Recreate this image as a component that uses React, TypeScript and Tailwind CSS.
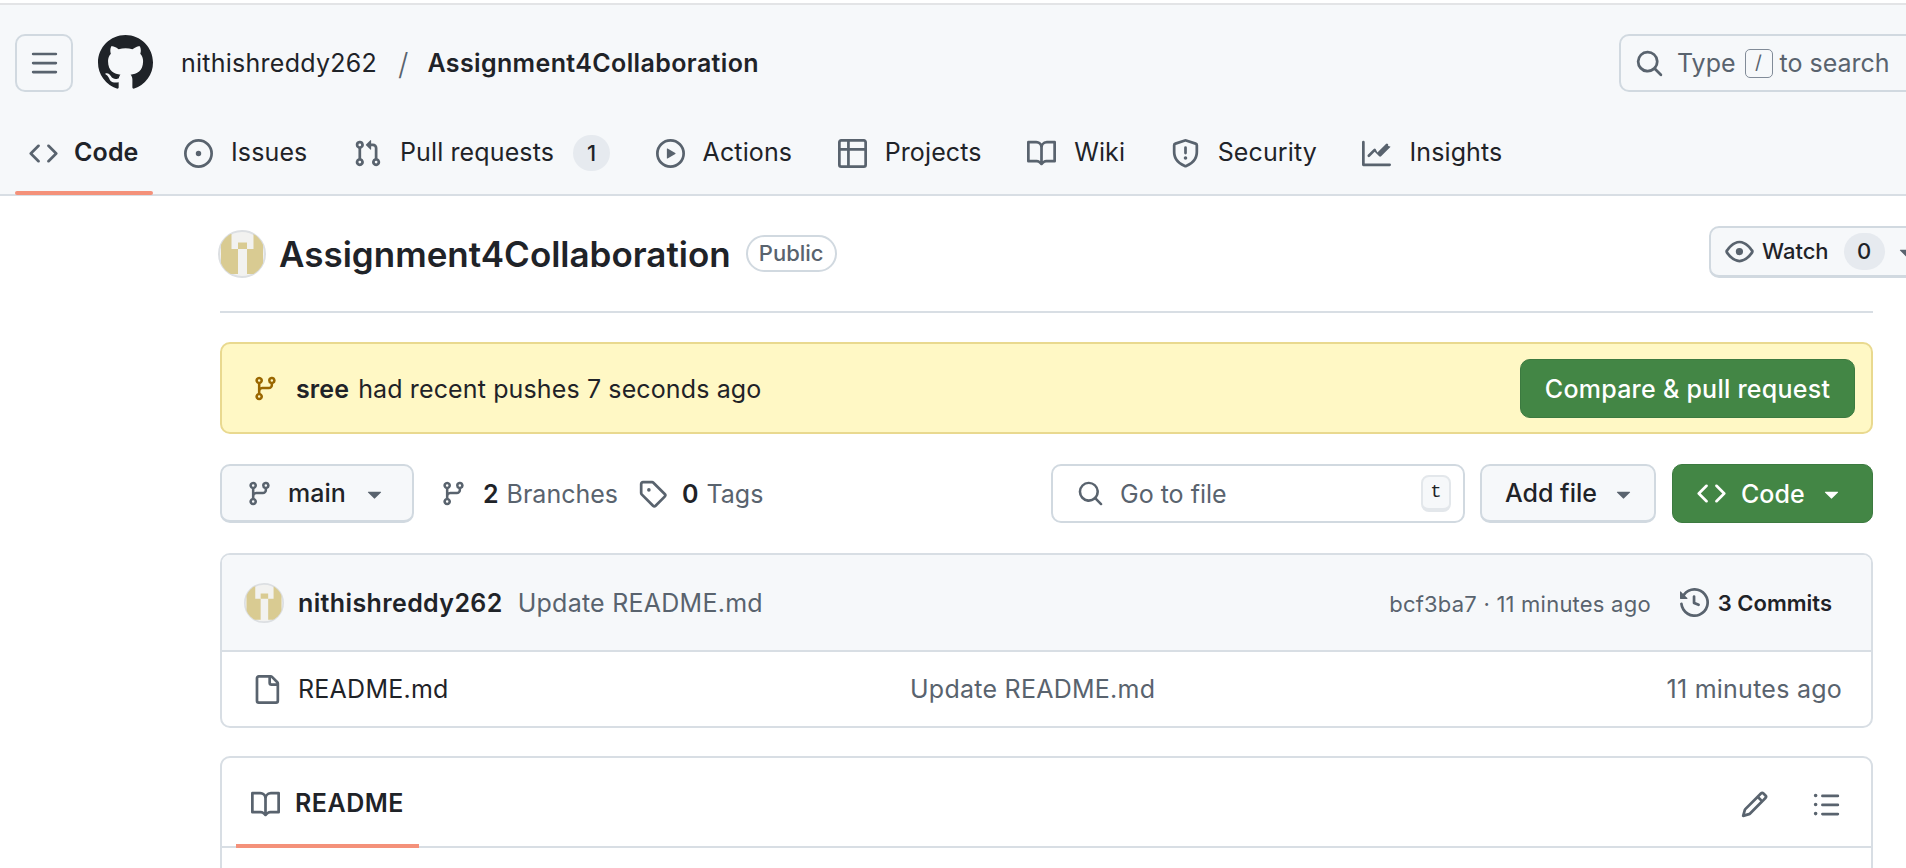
const icons: Record<string, string> = {
  bars: "M1 2.75A.75.75 0 0 1 1.75 2h12.5a.75.75 0 0 1 0 1.5H1.75A.75.75 0 0 1 1 2.75Zm0 5A.75.75 0 0 1 1.75 7h12.5a.75.75 0 0 1 0 1.5H1.75A.75.75 0 0 1 1 7.75ZM1.75 12h12.5a.75.75 0 0 1 0 1.5H1.75a.75.75 0 0 1 0-1.5Z",
  github: "M8 0c4.42 0 8 3.58 8 8a8.013 8.013 0 0 1-5.45 7.59c-.4.08-.55-.17-.55-.38 0-.27.01-1.13.01-2.2 0-.75-.25-1.23-.54-1.48 1.78-.2 3.65-.88 3.65-3.95 0-.88-.31-1.59-.82-2.15.08-.2.36-1.02-.08-2.12 0 0-.67-.22-2.2.82-.64-.18-1.32-.27-2-.27-.68 0-1.36.09-2 .27-1.53-1.03-2.2-.82-2.2-.82-.44 1.1-.16 1.92-.08 2.12-.51.56-.82 1.28-.82 2.15 0 3.06 1.86 3.75 3.64 3.95-.23.2-.44.55-.51 1.07-.46.21-1.61.55-2.33-.66-.15-.24-.6-.83-1.23-.82-.67.01-.27.38.01.53.34.19.73.9.82 1.13.16.45.68 1.31 2.69.94 0 .67.01 1.3.01 1.49 0 .21-.15.45-.55.38A7.995 7.995 0 0 1 0 8c0-4.42 3.58-8 8-8Z",
  code: "m11.28 3.22 4.25 4.25a.75.75 0 0 1 0 1.06l-4.25 4.25a.749.749 0 0 1-1.275-.326.749.749 0 0 1 .215-.734L13.94 8l-3.72-3.72a.749.749 0 0 1 .326-1.275.749.749 0 0 1 .734.215Zm-6.56 0a.751.751 0 0 1 1.042.018.751.751 0 0 1 .018 1.042L2.06 8l3.72 3.72a.749.749 0 0 1-.326 1.275.749.749 0 0 1-.734-.215L.47 8.53a.75.75 0 0 1 0-1.06Z",
  issue: "M8 9.5a1.5 1.5 0 1 0 0-3 1.5 1.5 0 0 0 0 3Z M8 0a8 8 0 1 1 0 16A8 8 0 0 1 8 0ZM1.5 8a6.5 6.5 0 1 0 13 0 6.5 6.5 0 0 0-13 0Z",
  pr: "M1.5 3.25a2.25 2.25 0 1 1 3 2.122v5.256a2.251 2.251 0 1 1-1.5 0V5.372A2.25 2.25 0 0 1 1.5 3.25Zm5.677-.177L9.573.677A.25.25 0 0 1 10 .854V2.5h1A2.5 2.5 0 0 1 13.5 5v5.628a2.251 2.251 0 1 1-1.5 0V5a1 1 0 0 0-1-1h-1v1.646a.25.25 0 0 1-.427.177L7.177 3.427a.25.25 0 0 1 0-.354ZM3.75 2.5a.75.75 0 1 0 0 1.5.75.75 0 0 0 0-1.5Zm0 9.5a.75.75 0 1 0 0 1.5.75.75 0 0 0 0-1.5Zm8.25.75a.75.75 0 1 0 1.5 0 .75.75 0 0 0-1.5 0Z",
  play: "M8 0a8 8 0 1 1 0 16A8 8 0 0 1 8 0ZM1.5 8a6.5 6.5 0 1 0 13 0 6.5 6.5 0 0 0-13 0Zm4.879-2.773 4.264 2.559a.25.25 0 0 1 0 .428l-4.264 2.559A.25.25 0 0 1 6 10.559V5.442a.25.25 0 0 1 .379-.215Z",
  table: "M0 1.75C0 .784.784 0 1.75 0h12.5C15.216 0 16 .784 16 1.75v12.5A1.75 1.75 0 0 1 14.25 16H1.75A1.75 1.75 0 0 1 0 14.25ZM6.5 6.5v8h7.75a.25.25 0 0 0 .25-.25V6.5Zm8-1.5V1.75a.25.25 0 0 0-.25-.25H6.5V5Zm-13 1.5v7.75c0 .138.112.25.25.25H5v-8ZM5 5V1.5H1.75a.25.25 0 0 0-.25.25V5Z",
  book: "M0 1.75A.75.75 0 0 1 .75 1h4.253c1.227 0 2.317.59 3 1.501A3.743 3.743 0 0 1 11.006 1h4.245a.75.75 0 0 1 .75.75v10.5a.75.75 0 0 1-.75.75h-4.507a2.25 2.25 0 0 0-1.591.659l-.622.621a.75.75 0 0 1-1.06 0l-.622-.621A2.25 2.25 0 0 0 5.258 13H.75a.75.75 0 0 1-.75-.75Zm7.251 10.324.004-5.073-.002-2.253A2.25 2.25 0 0 0 5.003 2.5H1.5v9h3.757a3.75 3.75 0 0 1 1.994.574ZM8.755 4.75l-.004 7.322a3.752 3.752 0 0 1 1.992-.572H14.5v-9h-3.495a2.25 2.25 0 0 0-2.25 2.25Z",
  shield: "M7.467.133a1.748 1.748 0 0 1 1.066 0l5.25 1.68A1.75 1.75 0 0 1 15 3.48V7c0 1.566-.32 3.182-1.303 4.682-.983 1.498-2.585 2.813-5.032 3.855a1.697 1.697 0 0 1-1.33 0c-2.447-1.042-4.049-2.357-5.032-3.855C1.32 10.182 1 8.566 1 7V3.48a1.75 1.75 0 0 1 1.217-1.667Zm.61 1.429a.25.25 0 0 0-.153 0l-5.25 1.68a.25.25 0 0 0-.174.238V7c0 1.358.275 2.666 1.057 3.86.784 1.194 2.121 2.34 4.366 3.297a.196.196 0 0 0 .154 0c2.245-.956 3.582-2.104 4.366-3.298C13.225 9.666 13.5 8.36 13.5 7V3.48a.251.251 0 0 0-.174-.237l-5.25-1.68ZM8.75 4.75v3a.75.75 0 0 1-1.5 0v-3a.75.75 0 0 1 1.5 0ZM9 10.5a1 1 0 1 1-2 0 1 1 0 0 1 2 0Z",
  graph: "M1.5 1.75V13.5h13.75a.75.75 0 0 1 0 1.5H.75a.75.75 0 0 1-.75-.75V1.75a.75.75 0 0 1 1.5 0Zm14.28 2.53-5.25 5.25a.75.75 0 0 1-1.06 0L7 7.06 4.28 9.78a.751.751 0 0 1-1.042-.018.751.751 0 0 1-.018-1.042l3.25-3.25a.75.75 0 0 1 1.06 0L8.5 7.44l4.72-4.72a.751.751 0 0 1 1.042.018.751.751 0 0 1 .018 1.042Z",
  branch: "M9.5 3.25a2.25 2.25 0 1 1 3 2.122V6A2.5 2.5 0 0 1 10 8.5H6a1 1 0 0 0-1 1v1.128a2.251 2.251 0 1 1-1.5 0V5.372a2.25 2.25 0 1 1 1.5 0v1.836A2.493 2.493 0 0 1 6 7h4a1 1 0 0 0 1-1v-.628A2.25 2.25 0 0 1 9.5 3.25Zm-6 0a.75.75 0 1 0 1.5 0 .75.75 0 0 0-1.5 0Zm8.25-.75a.75.75 0 1 0 0 1.5.75.75 0 0 0 0-1.5ZM4.25 12a.75.75 0 1 0 0 1.5.75.75 0 0 0 0-1.5Z",
  tag: "M1 7.775V2.75C1 1.784 1.784 1 2.75 1h5.025c.464 0 .91.184 1.238.513l6.25 6.25a1.75 1.75 0 0 1 0 2.474l-5.026 5.026a1.75 1.75 0 0 1-2.474 0l-6.25-6.25A1.752 1.752 0 0 1 1 7.775Zm1.5 0c0 .066.026.13.073.177l6.25 6.25a.25.25 0 0 0 .354 0l5.025-5.025a.25.25 0 0 0 0-.354l-6.25-6.25a.25.25 0 0 0-.177-.073H2.75a.25.25 0 0 0-.25.25ZM6 5a1 1 0 1 1 0 2 1 1 0 0 1 0-2Z",
  search: "M10.68 11.74a6 6 0 0 1-7.922-8.982 6 6 0 0 1 8.982 7.922l3.04 3.04a.749.749 0 0 1-.326 1.275.749.749 0 0 1-.734-.215ZM11.5 7a4.499 4.499 0 1 0-8.997 0A4.499 4.499 0 0 0 11.5 7Z",
  file: "M2 1.75C2 .784 2.784 0 3.75 0h6.586c.464 0 .909.184 1.237.513l2.914 2.914c.329.328.513.773.513 1.237v9.586A1.75 1.75 0 0 1 13.25 16h-9.5A1.75 1.75 0 0 1 2 14.25Zm1.75-.25a.25.25 0 0 0-.25.25v12.5c0 .138.112.25.25.25h9.5a.25.25 0 0 0 .25-.25V6h-2.75A1.75 1.75 0 0 1 9 4.25V1.5Zm6.75.062V4.25c0 .138.112.25.25.25h2.688l-.011-.013-2.914-2.914-.013-.011Z",
  history: "m.427 1.927 1.215 1.215a8.002 8.002 0 1 1-1.6 5.685.75.75 0 1 1 1.493-.154 6.5 6.5 0 1 0 1.18-4.458l1.358 1.358A.25.25 0 0 1 3.896 6H.25A.25.25 0 0 1 0 5.75V2.104a.25.25 0 0 1 .427-.177ZM7.75 4a.75.75 0 0 1 .75.75v2.992l2.028.812a.75.75 0 0 1-.557 1.392l-2.5-1A.751.751 0 0 1 7 8.25v-3.5A.75.75 0 0 1 7.75 4Z",
  pencil: "M11.013 1.427a1.75 1.75 0 0 1 2.474 0l1.086 1.086a1.75 1.75 0 0 1 0 2.474l-8.61 8.61c-.21.21-.47.364-.756.445l-3.251.93a.75.75 0 0 1-.927-.928l.929-3.25c.081-.286.235-.547.445-.758l8.61-8.61Zm.176 4.823L9.75 4.81l-6.286 6.287a.253.253 0 0 0-.064.108l-.558 1.953 1.953-.558a.253.253 0 0 0 .108-.064Zm1.238-3.763a.25.25 0 0 0-.354 0L10.811 3.75l1.439 1.44 1.263-1.263a.25.25 0 0 0 0-.354Z",
  list: "M5.75 2.5h8.5a.75.75 0 0 1 0 1.5h-8.5a.75.75 0 0 1 0-1.5Zm0 5h8.5a.75.75 0 0 1 0 1.5h-8.5a.75.75 0 0 1 0-1.5Zm0 5h8.5a.75.75 0 0 1 0 1.5h-8.5a.75.75 0 0 1 0-1.5ZM2 14a1 1 0 1 1 0-2 1 1 0 0 1 0 2Zm1-6a1 1 0 1 1-2 0 1 1 0 0 1 2 0ZM2 4a1 1 0 1 1 0-2 1 1 0 0 1 0 2Z",
  eye: "M8 2c1.981 0 3.671.992 4.933 2.078 1.27 1.091 2.187 2.345 2.637 3.023a1.62 1.62 0 0 1 0 1.798c-.45.678-1.367 1.932-2.637 3.023C11.67 13.008 9.981 14 8 14c-1.981 0-3.671-.992-4.933-2.078C1.797 10.83.88 9.576.43 8.898a1.62 1.62 0 0 1 0-1.798c.45-.677 1.367-1.931 2.637-3.022C4.33 2.992 6.019 2 8 2ZM1.679 7.932a.12.12 0 0 0 0 .136c.411.622 1.241 1.75 2.366 2.717C5.176 11.758 6.527 12.5 8 12.5c1.473 0 2.825-.742 3.955-1.715 1.124-.967 1.954-2.096 2.366-2.717a.12.12 0 0 0 0-.136c-.412-.621-1.242-1.75-2.366-2.717C10.824 4.242 9.473 3.5 8 3.5c-1.473 0-2.825.742-3.955 1.715-1.124.967-1.954 2.096-2.366 2.717ZM8 10a2 2 0 1 1-.001-3.999A2 2 0 0 1 8 10Z",
  caret: "m4.427 7.427 3.396 3.396a.25.25 0 0 0 .354 0l3.396-3.396A.25.25 0 0 0 11.396 7H4.604a.25.25 0 0 0-.177.427Z",
};

function Octicon({ name, className }: { name: string; className?: string }) {
  return (
    <svg viewBox="0 0 16 16" fill="currentColor" className={"shrink-0 " + (className ?? "w-[29px] h-[29px] text-[#59636e]")}>
      <path d={icons[name]} />
    </svg>
  );
}

// identicon of the repo owner
function Avatar({ className }: { className: string }) {
  return (
    <svg viewBox="0 0 48 48" className={"shrink-0 " + className}>
      <clipPath id="avatar-clip">
        <circle cx="24" cy="24" r="23" />
      </clipPath>
      <circle cx="24" cy="24" r="23" fill="#f2f2f0" stroke="#dcdfe2" strokeWidth="2" />
      <g clipPath="url(#avatar-clip)" fill="#d9cb92">
        <path d="M3 4h10.5v15H20v25H3z" />
        <path d="M20 12.5h9V19h-9z" />
        <path d="M35.5 4H45v40H29V19h6.5z" />
      </g>
    </svg>
  );
}

function Tab({ icon, label, active, children }: { icon: string; label: string; active?: boolean; children?: React.ReactNode }) {
  return (
    <div className={"relative flex h-[72px] items-center px-[14px] pb-[10px] text-[25px] tracking-[0.005em] text-[#1f2328] " + (active ? "gap-[16px] font-semibold" : "gap-[18px]")}>
      <Octicon name={icon} />
      <span>{label}</span>
      {children}
      {active && <div className="absolute bottom-[-1px] left-0 right-0 h-[4px] rounded-full bg-[#f4917a]" />}
    </div>
  );
}

export default function App() {
  return (
    <div className="h-[868px] w-[1906px] overflow-hidden bg-white font-['Inter',sans-serif] text-[#1f2328]">
      {/* top bar */}
      <header className="mt-[3px] border-y-2 border-t-[#e3e4e6] border-b-[#d8dee4] bg-[#f6f8fa]">
        <div className="flex h-[117px] items-start pt-[29px] pl-[15px]">
          <div className="flex h-[58px] w-[58px] shrink-0 items-center justify-center rounded-[10px] border-2 border-[#d1d9e0]">
            <Octicon name="bars" />
          </div>
          <Octicon name="github" className="ml-[25px] mt-[1px] h-[55px] w-[55px] text-[#1f2328]" />
          <div className="ml-[28px] flex h-[58px] items-center pt-[2px] text-[25px]">
            <span className="tracking-[0.01em]">nithishreddy262</span>
            <span className="ml-[21px] text-[30px] font-light text-[#59636e]">/</span>
            <span className="ml-[19px] font-semibold tracking-[0.015em]">Assignment4Collaboration</span>
          </div>
          <div className="ml-auto mr-[-113px] flex h-[58px] w-[400px] shrink-0 items-center rounded-[10px] border-2 border-[#d1d9e0] pl-[14px] text-[25px] text-[#59636e]">
            <Octicon name="search" />
            <span className="ml-[13px] pt-[2px]">Type</span>
            <span className="ml-[9px] flex h-[29px] w-[28px] items-center justify-center rounded-[5px] border border-[#818b98] text-[19px]">/</span>
            <span className="ml-[7px] pt-[2px]">to search</span>
          </div>
        </div>
        <nav className="flex h-[72px] items-start gap-[17.5px] pl-[15px]">
          <Tab icon="code" label="Code" active />
          <Tab icon="issue" label="Issues" />
          <Tab icon="pr" label="Pull requests">
            <span className="ml-[1px] flex h-[36px] w-[37px] items-center justify-center rounded-full bg-[#e6eaef] text-[22px] font-medium">1</span>
          </Tab>
          <Tab icon="play" label="Actions" />
          <Tab icon="table" label="Projects" />
          <Tab icon="book" label="Wiki" />
          <Tab icon="shield" label="Security" />
          <Tab icon="graph" label="Insights" />
        </nav>
      </header>

      <main className="ml-[220px] w-[1653px]">
        {/* repo title */}
        <div className="flex h-[117px] items-start border-b-2 border-[#d8dee4] pt-[30px]">
          <Avatar className="mt-[4px] ml-[-2px] h-[48px] w-[48px]" />
          <h1 className="ml-[13px] flex h-[56px] items-center text-[35px] font-semibold">Assignment4Collaboration</h1>
          <span className="ml-[15px] mt-[9px] flex h-[37px] w-[91px] items-center justify-center rounded-full border-2 border-[#d1d9e0] text-[22px] font-medium text-[#59636e]">Public</span>
          <div className="ml-auto mr-[-70px] flex h-[52px] w-[234px] shrink-0 items-center rounded-[10px] border-2 border-b-[3px] border-[#d1d9e0] bg-[#f6f8fa] pl-[14px] text-[22px] font-medium">
            <Octicon name="eye" />
            <span className="ml-[8px]">Watch</span>
            <span className="ml-[15px] flex h-[37px] w-[41px] items-center justify-center rounded-full bg-[#e6eaef]">0</span>
            <Octicon name="caret" className="ml-[7px] h-[29px] w-[29px] text-[#59636e]" />
          </div>
        </div>

        {/* recent pushes banner */}
        <div className="mt-[29px] flex h-[92px] items-center justify-between rounded-[10px] border-2 border-[#e9d98f] bg-[#fff8c5] pr-[16px] pl-[30px]">
          <div className="flex items-center text-[25px] tracking-[0.005em]">
            <Octicon name="branch" className="h-[27px] w-[27px] text-[#9a6700]" />
            <span className="ml-[17px] pt-[3px] font-semibold">sree</span>
            <span className="ml-[9px] pt-[3px]">had recent pushes 7 seconds ago</span>
          </div>
          <div className="flex h-[59px] w-[335px] items-center justify-center rounded-[10px] border border-[#3c7a40] bg-[#438645] pt-[3px] text-[25px] font-medium tracking-[0.01em] text-white">Compare &amp; pull request</div>
        </div>

        {/* branch bar */}
        <div className="mt-[30px] flex h-[59px] items-center">
          <div className="flex h-[59px] w-[194px] shrink-0 items-center rounded-[10px] border-2 border-b-[3px] border-[#d1d9e0] bg-[#f6f8fa] pl-[24px] text-[25px] font-medium">
            <Octicon name="branch" className="h-[27px] w-[27px] text-[#59636e]" />
            <span className="ml-[15px] pt-[2px]">main</span>
            <Octicon name="caret" className="ml-[14px] h-[29px] w-[29px] text-[#59636e]" />
          </div>
          <Octicon name="branch" className="ml-[26px] h-[27px] w-[27px] text-[#59636e]" />
          <span className="ml-[16px] pt-[2px] text-[25px] font-semibold">2</span>
          <span className="ml-[8px] pt-[2px] text-[25px] text-[#59636e]">Branches</span>
          <Octicon name="tag" className="ml-[20px] h-[29px] w-[29px] text-[#59636e]" />
          <span className="ml-[15px] pt-[2px] text-[25px] font-semibold">0</span>
          <span className="ml-[8px] pt-[2px] text-[25px] text-[#59636e]">Tags</span>

          <div className="ml-auto flex h-[59px] w-[414px] items-center rounded-[10px] border-2 border-[#d1d9e0] bg-white pr-[12px] pl-[24px] text-[25px] text-[#59636e]">
            <Octicon name="search" className="h-[27px] w-[27px] text-[#59636e]" />
            <span className="ml-[16px] pt-[2px]">Go to file</span>
            <span className="ml-auto flex h-[37px] w-[30px] items-center justify-center rounded-[8px] border-2 border-b-[4px] border-[#e3e7eb] bg-[#f6f8fa] font-['Liberation_Mono',monospace] text-[19px] text-[#1f2328]">t</span>
          </div>
          <div className="ml-[15px] flex h-[59px] w-[176px] shrink-0 items-center rounded-[10px] border-2 border-b-[3px] border-[#d1d9e0] bg-[#f6f8fa] pl-[23px] text-[25px] font-medium">
            <span className="pt-[2px]">Add file</span>
            <Octicon name="caret" className="ml-[12px] h-[29px] w-[29px] text-[#59636e]" />
          </div>
          <div className="ml-[16px] flex h-[59px] w-[201px] shrink-0 items-center rounded-[10px] border border-[#3c7a40] bg-[#438645] pl-[24px] text-[25px] font-medium text-white">
            <Octicon name="code" className="h-[29px] w-[29px] text-white" />
            <span className="ml-[15px] pt-[2px]">Code</span>
            <Octicon name="caret" className="ml-[12px] h-[29px] w-[29px] text-white" />
          </div>
        </div>

        {/* latest commit + files */}
        <div className="mt-[30px] overflow-hidden rounded-[10px] border-2 border-[#d8dee4]">
          <div className="flex h-[97px] items-center border-b-2 border-[#d8dee4] bg-[#f6f8fa] pr-[39px] pl-[22px]">
            <Avatar className="h-[40px] w-[40px]" />
            <span className="ml-[14px] pt-[3px] text-[25px] font-semibold tracking-[0.015em]">nithishreddy262</span>
            <span className="ml-[15px] pt-[3px] text-[25px] tracking-[0.01em] text-[#59636e]">Update README.md</span>
            <span className="ml-auto pt-[3px] text-[22px] tracking-[0.01em] text-[#59636e]">bcf3ba7 · 11 minutes ago</span>
            <Octicon name="history" className="ml-[29px] h-[29px] w-[29px] text-[#59636e]" />
            <span className="ml-[9px] pt-[2px] text-[22px] font-semibold">3 Commits</span>
          </div>
          <div className="flex h-[74px] items-center pr-[29px] pl-[30px] text-[25px] tracking-[0.01em]">
            <Octicon name="file" className="h-[29px] w-[29px] text-[#59636e]" />
            <span className="ml-[17px] w-[612px] pt-[2px]">README.md</span>
            <span className="pt-[2px] text-[#59636e]">Update README.md</span>
            <span className="ml-auto pt-[2px] text-[#59636e]">11 minutes ago</span>
          </div>
        </div>

        {/* readme */}
        <div className="mt-[28px] h-[200px] rounded-[10px] border-2 border-[#d8dee4]">
          <div className="flex h-[90px] items-center border-b-2 border-[#d8dee4] pr-[30px]">
            <div className="relative ml-[14px] flex h-full w-[183px] items-center pt-[4px] pl-[15px]">
              <Octicon name="book" className="h-[29px] w-[29px] text-[#59636e]" />
              <span className="ml-[15px] text-[25px] font-semibold tracking-[0.02em]">README</span>
              <div className="absolute bottom-[-2px] left-0 right-0 h-[4px] bg-[#f4917a]" />
            </div>
            <Octicon name="pencil" className="ml-auto mt-[4px] h-[29px] w-[29px] text-[#59636e]" />
            <Octicon name="list" className="ml-[43px] mt-[4px] h-[29px] w-[29px] text-[#59636e]" />
          </div>
        </div>
      </main>
    </div>
  );
}
